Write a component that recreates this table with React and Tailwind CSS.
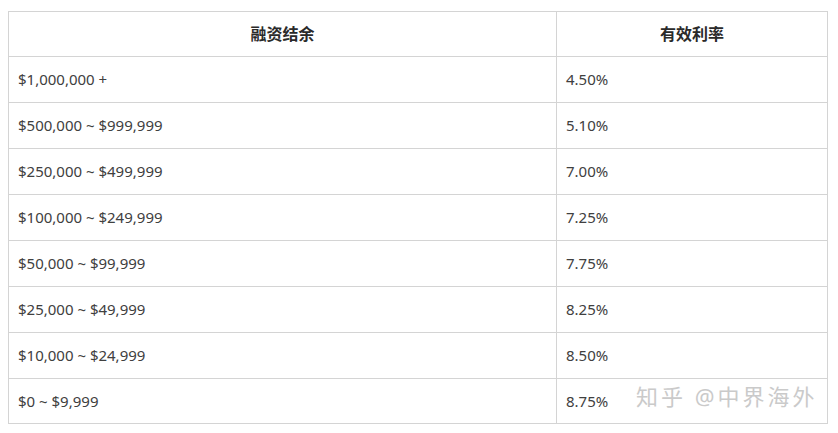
export default function App() {
  const rows = [
    ["$1,000,000 +", "4.50%"],
    ["$500,000 ~ $999,999", "5.10%"],
    ["$250,000 ~ $499,999", "7.00%"],
    ["$100,000 ~ $249,999", "7.25%"],
    ["$50,000 ~ $99,999", "7.75%"],
    ["$25,000 ~ $49,999", "8.25%"],
    ["$10,000 ~ $24,999", "8.50%"],
    ["$0 ~ $9,999", "8.75%"],
  ];

  return (
    <div
      className="w-[838px] h-[433px] bg-white pt-[11px] pl-[8px] relative overflow-hidden"
      style={{ fontFamily: '"Noto Sans", "Noto Sans CJK SC", sans-serif' }}
    >
      <table className="border-collapse w-[820px] text-[15px] text-[#404040]">
        <thead>
          <tr className="h-[45px]">
            <th className="w-[548px] border border-[#d4d4d4] text-[16px] font-bold text-[#2a2a2a] text-center">融资结余</th>
            <th className="border border-[#d4d4d4] text-[16px] font-bold text-[#2a2a2a] text-center">有效利率</th>
          </tr>
        </thead>
        <tbody>
          {rows.map((r, i) => (
            <tr key={i} className={i === rows.length - 1 ? "h-[45px]" : "h-[46px]"}>
              <td className="border border-[#d4d4d4] px-[9px] font-normal">{r[0]}</td>
              <td className="border border-[#d4d4d4] px-[9px] font-normal">{r[1]}</td>
            </tr>
          ))}
        </tbody>
      </table>

      {/* watermark */}
      <div className="absolute left-[636px] top-[380px] text-[22px] text-[#cacaca] tracking-[3px] whitespace-nowrap">
        知乎 @中界海外
      </div>
    </div>
  );
}
